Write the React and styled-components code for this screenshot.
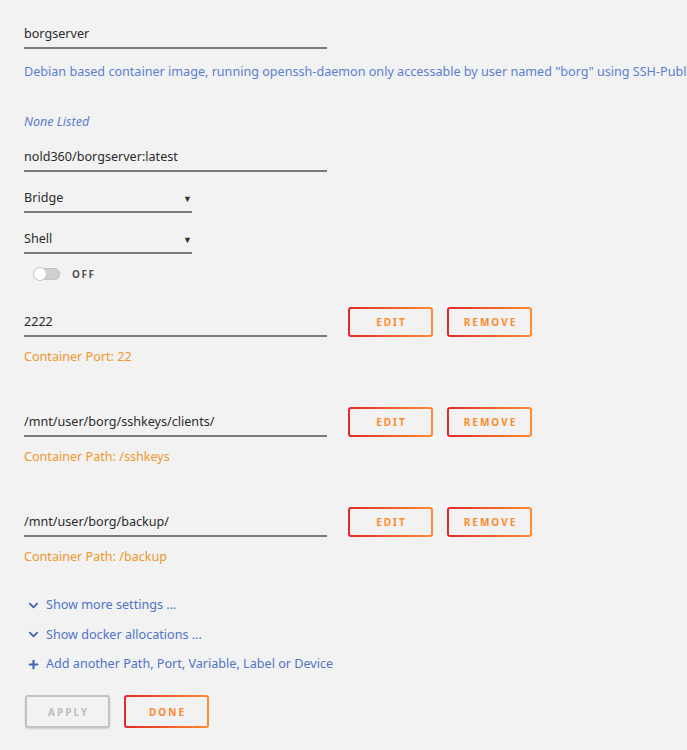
import React from "react";
import styled, { createGlobalStyle } from "styled-components";
import { FaChevronDown, FaPlus } from "react-icons/fa";

const GlobalStyle = createGlobalStyle`
  html, body {
    margin: 0;
    padding: 0;
    background: #f2f2f2;
    overflow: hidden;
  }
  body {
    font-family: "Noto Sans", "Open Sans", sans-serif;
    font-size: 12.6px;
    color: #333;
  }
`;

const Page = styled.div`
  width: 687px;
  height: 750px;
  padding: 19px 0 0 24px;
  box-sizing: border-box;
  overflow: hidden;
`;

const Field = styled.div`
  position: relative;
  width: ${(p) => p.$width || 303}px;
  height: 30px;
  box-sizing: border-box;
  border-bottom: 2px solid #7a7a7a;
  line-height: 29px;
  color: #2b2b2b;
  white-space: nowrap;
  margin-top: ${(p) => p.$top || 0}px;
`;

const Caret = styled.span`
  position: absolute;
  right: 0;
  top: 1px;
  font-size: 9px;
  color: #333;
`;

const Description = styled.div`
  margin-top: 13px;
  line-height: 20px;
  color: #5a7fd0;
  white-space: nowrap;
`;

const Muted = styled.div`
  margin-top: 30px;
  line-height: 20px;
  font-style: italic;
  color: #5a7fd0;
`;

const ToggleRow = styled.div`
  display: flex;
  align-items: center;
  gap: 12px;
  height: 20px;
  margin-top: 10px;
  padding-left: 10px;
`;

const Track = styled.span`
  position: relative;
  width: 26px;
  height: 12px;
  border-radius: 6px;
  background: #cfcfcf;
  box-shadow: inset 0 0 0 1px #c4c4c4;
`;

const Knob = styled.span`
  position: absolute;
  left: 0;
  top: 0;
  width: 12px;
  height: 12px;
  border-radius: 50%;
  background: #fff;
  box-shadow: 0 0 0 1px #c8c8c8;
`;

const ToggleLabel = styled.span`
  font-size: 10px;
  font-weight: 700;
  letter-spacing: 1.5px;
  color: #555;
`;

const MapRow = styled.div`
  display: flex;
  align-items: flex-end;
  margin-top: ${(p) => p.$top}px;
`;

const Actions = styled.div`
  display: flex;
  gap: 14px;
  margin-left: 21px;
`;

const GradientButton = styled.button`
  width: 85px;
  height: ${(p) => p.$height || 30}px;
  box-sizing: border-box;
  border: 2px solid transparent;
  border-radius: 3px;
  background: linear-gradient(#f2f2f2, #f2f2f2) padding-box,
    linear-gradient(90deg, #e22828, #ff8c2f) border-box;
  font-family: "Noto Sans", sans-serif;
  font-size: 10px;
  font-weight: 700;
  letter-spacing: 2px;
  text-transform: uppercase;
  color: #fb8a2e;
  padding: 0 0 0 2px;
`;

const DisabledButton = styled.button`
  width: 85px;
  height: 33px;
  box-sizing: border-box;
  border: 2px solid #c2c2c2;
  border-radius: 3px;
  background: #f2f2f2;
  box-shadow: 0 1px 2px rgba(0, 0, 0, 0.15);
  font-family: "Noto Sans", sans-serif;
  font-size: 10px;
  font-weight: 700;
  letter-spacing: 2px;
  color: #bdbdbd;
  padding: 0 0 0 2px;
`;

const Help = styled.div`
  margin-top: 10px;
  line-height: 20px;
  color: #ef982a;
`;

const Links = styled.div`
  display: flex;
  flex-direction: column;
  gap: 9.5px;
  margin-top: 28px;
`;

const LinkItem = styled.div`
  display: flex;
  align-items: center;
  gap: 7px;
  padding-left: 4px;
  line-height: 20px;
  color: #4f74c6;
  svg {
    width: 11px;
    height: 11px;
    color: #3f64b6;
  }
`;

const Footer = styled.div`
  display: flex;
  gap: 14px;
  margin-top: 21px;
  padding-left: 1px;
`;

const mappings = [
  { value: "2222", help: "Container Port: 22", top: 23 },
  { value: "/mnt/user/borg/sshkeys/clients/", help: "Container Path: /sshkeys", top: 40 },
  { value: "/mnt/user/borg/backup/", help: "Container Path: /backup", top: 40 },
];

export default function App() {
  return (
    <Page>
      <GlobalStyle />
      <Field>borgserver</Field>
      <Description>
        Debian based container image, running openssh-daemon only accessable by user named "borg" using SSH-Publickey authentication
      </Description>
      <Muted>None Listed</Muted>
      <Field $top={10}>nold360/borgserver:latest</Field>
      <Field $top={11} $width={168}>
        Bridge<Caret>▼</Caret>
      </Field>
      <Field $top={11} $width={168}>
        Shell<Caret>▼</Caret>
      </Field>
      <ToggleRow>
        <Track>
          <Knob />
        </Track>
        <ToggleLabel>OFF</ToggleLabel>
      </ToggleRow>

      {mappings.map((m) => (
        <div key={m.value}>
          <MapRow $top={m.top}>
            <Field>{m.value}</Field>
            <Actions>
              <GradientButton>Edit</GradientButton>
              <GradientButton>Remove</GradientButton>
            </Actions>
          </MapRow>
          <Help>{m.help}</Help>
        </div>
      ))}

      <Links>
        <LinkItem>
          <FaChevronDown />
          Show more settings ...
        </LinkItem>
        <LinkItem>
          <FaChevronDown />
          Show docker allocations ...
        </LinkItem>
        <LinkItem>
          <FaPlus />
          Add another Path, Port, Variable, Label or Device
        </LinkItem>
      </Links>

      <Footer>
        <DisabledButton>APPLY</DisabledButton>
        <GradientButton $height={33}>Done</GradientButton>
      </Footer>
    </Page>
  );
}
